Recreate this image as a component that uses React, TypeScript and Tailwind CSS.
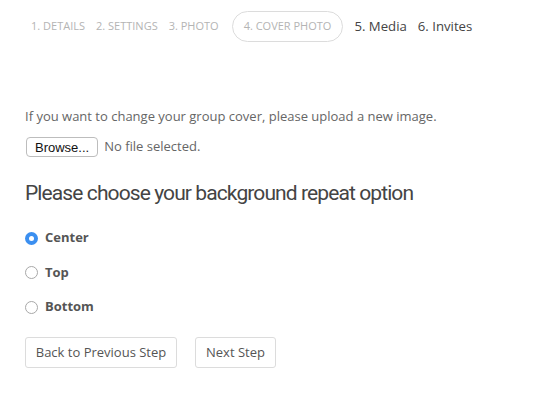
import * as React from "react";

const STEPS_DONE = ["1. Details", "2. Settings", "3. Photo"];
const STEPS_NEXT = ["5. Media", "6. Invites"];

const OPTIONS = ["Center", "Top", "Bottom"];

function Radio({ checked }: { checked: boolean }) {
  if (checked) {
    return (
      <span className="flex h-[13px] w-[13px] items-center justify-center rounded-full bg-[#3b8ff0]">
        <span className="h-[5px] w-[5px] rounded-full bg-white" />
      </span>
    );
  }
  return <span className="h-[13px] w-[13px] rounded-full border border-[#a8a8a8] bg-white" />;
}

export default function App() {
  const [repeat, setRepeat] = React.useState("Center");

  return (
    <div className="min-h-[404px] w-[536px] bg-white font-['Open_Sans',sans-serif]">
      {/* Step nav */}
      <div className="flex items-center pl-[31px] pt-[11px]">
        {STEPS_DONE.map((s) => (
          <span key={s} className="mr-[11px] text-[11px] uppercase text-[#b4b4b4]">
            {s}
          </span>
        ))}
        <span className="ml-[2px] flex h-[31px] items-center rounded-full border border-[#dcdcdc] px-[11px] text-[11px] uppercase text-[#b4b4b4]">
          4. Cover Photo
        </span>
        {STEPS_NEXT.map((s) => (
          <span key={s} className="ml-[11px] text-[13.2px] text-[#444]">
            {s}
          </span>
        ))}
      </div>

      <div className="px-[25px]">
        <p className="mt-[65px] text-[13px] text-[#666]">
          If you want to change your group cover, please upload a new image.
        </p>

        <div className="mt-[10px] flex items-center">
          <button className="ml-px h-[20px] rounded-[4px] border border-[#bdbdbd] bg-white px-[8px] font-['Liberation_Sans',sans-serif] text-[13px] text-[#111]">
            Browse...
          </button>
          <span className="ml-[6px] text-[13px] text-[#666]">No file selected.</span>
        </div>

        <h2 className="mt-[21px] font-['Roboto',sans-serif] text-[21px] font-normal tracking-[-0.9px] text-[#444]">
          Please choose your background repeat option
        </h2>

        <div className="mt-[20px] flex flex-col gap-[16.5px]">
          {OPTIONS.map((o) => (
            <label
              key={o}
              className="flex h-[18px] cursor-pointer items-center gap-[7px]"
              onClick={() => setRepeat(o)}
            >
              <Radio checked={repeat === o} />
              <span className="text-[13px] font-bold text-[#555]">{o}</span>
            </label>
          ))}
        </div>

        <div className="mt-[21px] flex gap-[18px]">
          <button className="h-[31px] w-[152px] rounded-[3px] border border-[#dcdcdc] bg-white text-[13px] text-[#555]">
            Back to Previous Step
          </button>
          <button className="h-[31px] w-[81px] rounded-[3px] border border-[#dcdcdc] bg-white text-[13px] text-[#555]">
            Next Step
          </button>
        </div>
      </div>
    </div>
  );
}
